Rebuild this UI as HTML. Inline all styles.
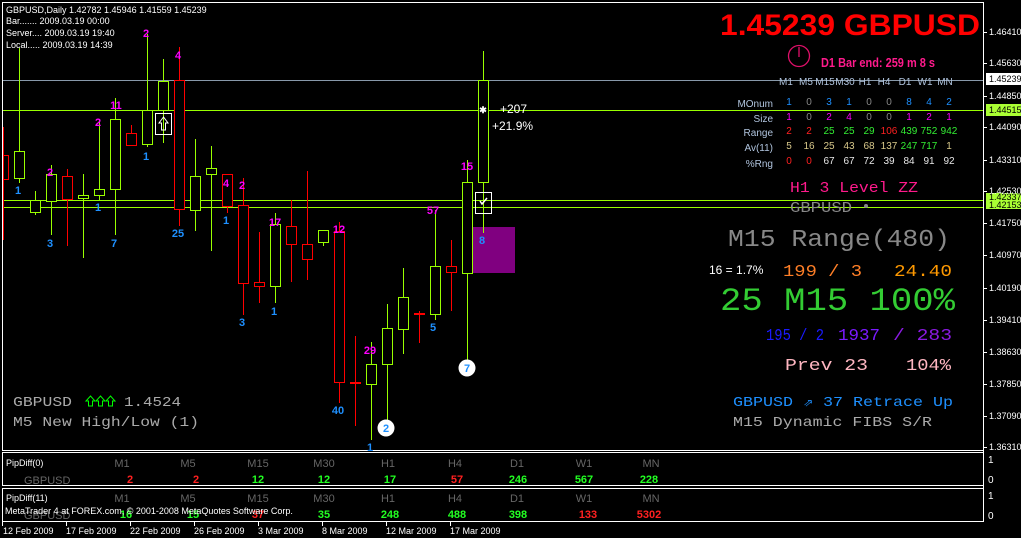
<!DOCTYPE html>
<html><head><meta charset="utf-8"><style>
html,body{margin:0;padding:0;background:#000;width:1021px;height:538px;overflow:hidden}
svg{display:block}
.s{font-family:"Liberation Sans",sans-serif}
.m{font-family:"Liberation Mono",monospace}
.b{font-weight:bold}
</style></head><body>
<svg width="1021" height="538" viewBox="0 0 1021 538" xmlns="http://www.w3.org/2000/svg">
<rect width="1021" height="538" fill="#000"/>
<!-- borders -->
<rect x="2.5" y="2.5" width="981" height="448" fill="none" stroke="#fff"/>
<rect x="2.5" y="452.5" width="981" height="33" fill="none" stroke="#fff"/>
<rect x="2.5" y="488.5" width="981" height="33" fill="none" stroke="#fff"/>
<!-- horizontal lines -->
<line x1="3" y1="80.5" x2="983" y2="80.5" stroke="#8899aa"/>
<line x1="3" y1="110.5" x2="983" y2="110.5" stroke="#99ff00"/>
<line x1="3" y1="200.5" x2="983" y2="200.5" stroke="#99ff00"/>
<line x1="3" y1="207.5" x2="983" y2="207.5" stroke="#99ff00"/>
<!-- purple box -->
<rect x="473" y="227" width="42" height="46" fill="#800080"/>
<g fill="none" stroke-width="1">
<g stroke="#ff0000">
<line x1="3.5" y1="127" x2="3.5" y2="240"/><path d="M3 155.5H8.5V179.5H3"/>
<line x1="67.5" y1="169" x2="67.5" y2="246"/><rect x="62.5" y="176.5" width="10" height="23" fill="#000"/>
<line x1="131.5" y1="125" x2="131.5" y2="145"/><rect x="126.5" y="133.5" width="10" height="12" fill="#000"/>
<line x1="179.5" y1="47" x2="179.5" y2="226"/><rect x="174.5" y="80.5" width="10" height="129" fill="#000"/>
<line x1="227.5" y1="174" x2="227.5" y2="213"/><rect x="222.5" y="174.5" width="10" height="32" fill="#000"/>
<line x1="243.5" y1="178" x2="243.5" y2="315"/><rect x="238.5" y="205.5" width="10" height="78" fill="#000"/>
<line x1="259.5" y1="232" x2="259.5" y2="303"/><rect x="254.5" y="282.5" width="10" height="4" fill="#000"/>
<line x1="291.5" y1="200" x2="291.5" y2="282"/><rect x="286.5" y="226.5" width="10" height="18" fill="#000"/>
<line x1="307.5" y1="171" x2="307.5" y2="280"/><rect x="302.5" y="244.5" width="10" height="15" fill="#000"/>
<line x1="339.5" y1="222" x2="339.5" y2="403"/><rect x="334.5" y="231.5" width="10" height="151" fill="#000"/>
<line x1="355.5" y1="336" x2="355.5" y2="426"/><line x1="350" y1="383" x2="361" y2="383" stroke-width="2"/>
<line x1="419.5" y1="311" x2="419.5" y2="343"/><line x1="414" y1="314" x2="425" y2="314" stroke-width="2"/>
<line x1="451.5" y1="240" x2="451.5" y2="311"/><rect x="446.5" y="266.5" width="10" height="6" fill="#000"/>
</g>
<g stroke="#99ff00">
<line x1="19.5" y1="48" x2="19.5" y2="183"/><rect x="14.5" y="151.5" width="10" height="27" fill="#000"/>
<line x1="35.5" y1="191" x2="35.5" y2="215"/><rect x="30.5" y="200.5" width="10" height="12" fill="#000"/>
<line x1="51.5" y1="165" x2="51.5" y2="235"/><rect x="46.5" y="174.5" width="10" height="27" fill="#000"/>
<line x1="83.5" y1="174" x2="83.5" y2="258"/><rect x="78.5" y="195.5" width="10" height="3" fill="#000"/>
<line x1="99.5" y1="122" x2="99.5" y2="200"/><rect x="94.5" y="189.5" width="10" height="6" fill="#000"/>
<line x1="115.5" y1="98" x2="115.5" y2="235"/><rect x="110.5" y="119.5" width="10" height="70" fill="#000"/>
<line x1="147.5" y1="34" x2="147.5" y2="147"/><rect x="142.5" y="110.5" width="10" height="34" fill="#000"/>
<line x1="163.5" y1="59" x2="163.5" y2="143"/><rect x="158.5" y="81.5" width="10" height="29" fill="#000"/>
<line x1="195.5" y1="139" x2="195.5" y2="231"/><rect x="190.5" y="176.5" width="10" height="34" fill="#000"/>
<line x1="211.5" y1="146" x2="211.5" y2="251"/><rect x="206.5" y="168.5" width="10" height="6" fill="#000"/>
<line x1="275.5" y1="213" x2="275.5" y2="303"/><rect x="270.5" y="224.5" width="10" height="62" fill="#000"/>
<line x1="323.5" y1="230" x2="323.5" y2="246"/><rect x="318.5" y="230.5" width="10" height="12" fill="#000"/>
<line x1="371.5" y1="342" x2="371.5" y2="440"/><rect x="366.5" y="364.5" width="10" height="20" fill="#000"/>
<line x1="387.5" y1="304" x2="387.5" y2="425"/><rect x="382.5" y="328.5" width="10" height="36" fill="#000"/>
<line x1="403.5" y1="268" x2="403.5" y2="354"/><rect x="398.5" y="297.5" width="10" height="32" fill="#000"/>
<line x1="435.5" y1="210" x2="435.5" y2="320"/><rect x="430.5" y="266.5" width="10" height="48" fill="#000"/>
<line x1="467.5" y1="160" x2="467.5" y2="360"/><rect x="462.5" y="182.5" width="10" height="91" fill="#000"/>
<line x1="483.5" y1="51" x2="483.5" y2="233"/><rect x="478.5" y="80.5" width="10" height="102" fill="#000"/>
</g>
<rect x="155.5" y="113.5" width="16" height="21" stroke="#fff"/>
<path d="M163.5 117L159 123H161.5V130H165.5V123H168Z" stroke="#fff"/>
<rect x="475.5" y="192.5" width="16" height="21" stroke="#fff"/>
<path d="M480 201L482 204L487 198" stroke="#fff" stroke-width="1.5"/>
</g>
<text x="483" y="113" fill="#fff" class="s b" font-size="9" text-anchor="middle">✱</text>
<!-- circles -->
<circle cx="467" cy="368" r="8.5" fill="#fff"/><circle cx="386" cy="428" r="8.5" fill="#fff"/>
<g class="s b" font-size="11" text-anchor="middle" fill="#ff00ff">
<text x="146" y="37">2</text><text x="178" y="59">4</text><text x="116" y="109">11</text><text x="98" y="126">2</text><text x="50" y="176">2</text><text x="226" y="187">4</text><text x="242" y="189">2</text><text x="467" y="170">15</text><text x="433" y="214">57</text><text x="275" y="226">17</text><text x="339" y="233">12</text><text x="370" y="354">29</text>
</g>
<g class="s b" font-size="11" text-anchor="middle" fill="#1e90ff">
<text x="18" y="194">1</text><text x="50" y="247">3</text><text x="98" y="211">1</text><text x="114" y="247">7</text><text x="146" y="160">1</text><text x="178" y="237">25</text><text x="226" y="224">1</text><text x="242" y="326">3</text><text x="274" y="315">1</text><text x="433" y="331">5</text><text x="338" y="414">40</text><text x="370" y="451">1</text><text x="482" y="244">8</text><text x="467" y="372">7</text><text x="386" y="432">2</text>
</g>
<text x="500" y="113" fill="#fff" class="s" font-size="12">+207</text>
<text x="492" y="130" fill="#fff" class="s" font-size="12">+21.9%</text>
<!-- top-left info -->
<g class="s" font-size="9" fill="#fff">
<text x="6" y="13">GBPUSD,Daily  1.42782 1.45946 1.41559 1.45239</text>
<text x="6" y="24">Bar....... 2009.03.19 00:00</text>
<text x="6" y="36">Server.... 2009.03.19 19:40</text>
<text x="6" y="48">Local..... 2009.03.19 14:39</text>
</g>
<!-- big price -->
<text x="720" y="35" fill="#ff0000" class="s b" font-size="30" textLength="260" lengthAdjust="spacingAndGlyphs">1.45239 GBPUSD</text>
<circle cx="799" cy="56" r="10.5" fill="none" stroke="#e0106a" stroke-width="1.3"/>
<path d="M799 47V57" stroke="#e0106a" stroke-width="1.3"/>
<text x="821" y="67" fill="#ff1a8c" class="s b" font-size="13" textLength="114" lengthAdjust="spacingAndGlyphs">D1 Bar end: 259 m 8 s</text>
<!-- table -->
<g class="s" font-size="10" text-anchor="middle" fill="#b0c4de">
<text x="786" y="85">M1</text><text x="806" y="85">M5</text><text x="825" y="85">M15</text><text x="845" y="85">M30</text><text x="865" y="85">H1</text><text x="884" y="85">H4</text><text x="905" y="85">D1</text><text x="925" y="85">W1</text><text x="945" y="85">MN</text>
</g>
<g class="s" font-size="10" text-anchor="end" fill="#b0c4de">
<text x="773" y="107">MOnum</text><text x="773" y="122">Size</text><text x="773" y="136">Range</text><text x="773" y="151">Av(11)</text><text x="773" y="167">%Rng</text>
</g>
<g class="s" font-size="10" text-anchor="middle">
<g fill="#1e90ff"><text x="789" y="105">1</text><text x="829" y="105">3</text><text x="849" y="105">1</text><text x="909" y="105">8</text><text x="929" y="105">4</text><text x="949" y="105">2</text></g>
<g fill="#888"><text x="809" y="105">0</text><text x="869" y="105">0</text><text x="889" y="105">0</text><text x="809" y="120">0</text><text x="869" y="120">0</text><text x="889" y="120">0</text></g>
<g fill="#ff00ff"><text x="789" y="120">1</text><text x="829" y="120">2</text><text x="849" y="120">4</text><text x="909" y="120">1</text><text x="929" y="120">2</text><text x="949" y="120">1</text></g>
<g fill="#ff2020"><text x="789" y="134">2</text><text x="809" y="134">2</text><text x="889" y="134">106</text><text x="789" y="164">0</text><text x="809" y="164">0</text></g>
<g fill="#33ee33"><text x="829" y="134">25</text><text x="849" y="134">25</text><text x="869" y="134">29</text><text x="909" y="134">439</text><text x="929" y="134">752</text><text x="949" y="134">942</text><text x="909" y="149">247</text><text x="929" y="149">717</text></g>
<g fill="#d8c88a"><text x="789" y="149">5</text><text x="809" y="149">16</text><text x="829" y="149">25</text><text x="849" y="149">43</text><text x="869" y="149">68</text><text x="889" y="149">137</text><text x="949" y="149">1</text></g>
<g fill="#e8e8e8"><text x="829" y="164">67</text><text x="849" y="164">67</text><text x="869" y="164">72</text><text x="889" y="164">39</text><text x="909" y="164">84</text><text x="929" y="164">91</text><text x="949" y="164">92</text></g>
</g>
<!-- mono texts right -->
<g class="m">
<text x="790" y="192" fill="#ff1a8c" font-size="15" textLength="128" lengthAdjust="spacingAndGlyphs">H1 3 Level ZZ</text>
<text x="790" y="212" fill="#888" font-size="15" textLength="62" lengthAdjust="spacingAndGlyphs">GBPUSD</text>
<circle cx="866" cy="206" r="2" fill="#888"/>
<text x="728" y="246" fill="#888" font-size="24" textLength="222" lengthAdjust="spacingAndGlyphs">M15 Range(480)</text>
<text x="783" y="276" fill="#ff7f27" font-size="17" textLength="79" lengthAdjust="spacingAndGlyphs">199 / 3</text>
<text x="894" y="276" fill="#ff9900" font-size="17" textLength="58" lengthAdjust="spacingAndGlyphs">24.40</text>
<text x="720" y="310" fill="#33cc33" font-size="32" textLength="235" lengthAdjust="spacingAndGlyphs">25  M15 100%</text>
<text x="766" y="340" fill="#1a1aff" font-size="17" textLength="58" lengthAdjust="spacingAndGlyphs">195 / 2</text>
<text x="838" y="340" fill="#7a1aff" font-size="17" textLength="42" lengthAdjust="spacingAndGlyphs">1937</text>
<text x="893" y="340" fill="#8a1ae0" font-size="17" textLength="59" lengthAdjust="spacingAndGlyphs">/ 283</text>
<text x="785" y="370" fill="#ffb6c1" font-size="17" textLength="83" lengthAdjust="spacingAndGlyphs">Prev 23</text>
<text x="906" y="370" fill="#ffb6c1" font-size="17" textLength="45" lengthAdjust="spacingAndGlyphs">104%</text>
<text x="733" y="406" fill="#1e90ff" font-size="14" textLength="220" lengthAdjust="spacingAndGlyphs">GBPUSD ⇗ 37 Retrace Up</text>
<text x="733" y="426" fill="#aaa" font-size="14" textLength="199" lengthAdjust="spacingAndGlyphs">M15 Dynamic FIBS S/R</text>
<text x="13" y="406" fill="#aaa" font-size="14" textLength="59" lengthAdjust="spacingAndGlyphs">GBPUSD</text>
<text x="124" y="406" fill="#aaa" font-size="14" textLength="57" lengthAdjust="spacingAndGlyphs">1.4524</text>
<text x="13" y="426" fill="#aaa" font-size="14" textLength="186" lengthAdjust="spacingAndGlyphs">M5 New High/Low (1)</text>
</g>
<text x="709" y="274" fill="#fff" class="s" font-size="12">16 = 1.7%</text>
<g fill="none" stroke="#00ff00" stroke-width="1">
<path d="M86 401L90.5 396L95 401H92.5V406H88.5V401Z"/><path d="M96 401L100.5 396L105 401H102.5V406H98.5V401Z"/><path d="M106 401L110.5 396L115 401H112.5V406H108.5V401Z"/>
</g>
<!-- right axis -->
<line x1="983.5" y1="2" x2="983.5" y2="522" stroke="#fff"/>
<g stroke="#fff">
<line x1="983" y1="32.5" x2="987" y2="32.5"/><line x1="983" y1="63.5" x2="987" y2="63.5"/><line x1="983" y1="96.5" x2="987" y2="96.5"/><line x1="983" y1="127.5" x2="987" y2="127.5"/><line x1="983" y1="160.5" x2="987" y2="160.5"/><line x1="983" y1="191.5" x2="987" y2="191.5"/><line x1="983" y1="223.5" x2="987" y2="223.5"/><line x1="983" y1="255.5" x2="987" y2="255.5"/><line x1="983" y1="288.5" x2="987" y2="288.5"/><line x1="983" y1="320.5" x2="987" y2="320.5"/><line x1="983" y1="352.5" x2="987" y2="352.5"/><line x1="983" y1="384.5" x2="987" y2="384.5"/><line x1="983" y1="416.5" x2="987" y2="416.5"/><line x1="983" y1="447.5" x2="987" y2="447.5"/>
</g>
<rect x="986" y="73" width="35" height="12" fill="#fff"/>
<rect x="986" y="104" width="35" height="12" fill="#aaff33"/>
<rect x="986" y="193" width="35" height="16" fill="#aaff33"/>
<g class="s" font-size="9" fill="#fff">
<text x="989" y="35">1.46410</text><text x="989" y="66">1.45630</text><text x="989" y="82" fill="#000">1.45239</text><text x="989" y="99">1.44850</text><text x="989" y="113" fill="#000">1.44515</text><text x="989" y="130">1.44090</text><text x="989" y="163">1.43310</text><text x="989" y="194">1.42530</text><text x="989" y="200" fill="#000">1.42337</text><text x="989" y="208" fill="#000">1.42153</text><text x="989" y="226">1.41750</text><text x="989" y="258">1.40970</text><text x="989" y="291">1.40190</text><text x="989" y="323">1.39410</text><text x="989" y="355">1.38630</text><text x="989" y="387">1.37850</text><text x="989" y="419">1.37090</text><text x="989" y="450">1.36310</text>
<text x="988" y="483" font-size="10">0</text><text x="988" y="463" font-size="10">1</text><text x="988" y="519" font-size="10">0</text><text x="988" y="499" font-size="10">1</text>
</g>
<!-- subwindows -->
<g class="s" font-size="9" fill="#fff"><text x="6" y="466">PipDiff(0)</text><text x="6" y="501">PipDiff(11)</text></g>
<text x="24" y="484" fill="#666" class="s" font-size="11">GBPUSD</text>
<text x="24" y="519" fill="#666" class="s" font-size="11">GBPUSD</text>
<g class="s" font-size="11" fill="#666" text-anchor="middle">
<text x="122" y="467">M1</text><text x="188" y="467">M5</text><text x="258" y="467">M15</text><text x="324" y="467">M30</text><text x="388" y="467">H1</text><text x="455" y="467">H4</text><text x="517" y="467">D1</text><text x="584" y="467">W1</text><text x="651" y="467">MN</text>
<text x="122" y="502">M1</text><text x="188" y="502">M5</text><text x="258" y="502">M15</text><text x="324" y="502">M30</text><text x="388" y="502">H1</text><text x="455" y="502">H4</text><text x="517" y="502">D1</text><text x="584" y="502">W1</text><text x="651" y="502">MN</text>
</g>
<g class="s b" font-size="11" text-anchor="middle">
<text x="130" y="483" fill="#ff2020">2</text><text x="196" y="483" fill="#ff2020">2</text><text x="258" y="483" fill="#22ff22">12</text><text x="324" y="483" fill="#22ff22">12</text><text x="390" y="483" fill="#22ff22">17</text><text x="457" y="483" fill="#ff2020">57</text><text x="518" y="483" fill="#22ff22">246</text><text x="584" y="483" fill="#22ff22">567</text><text x="649" y="483" fill="#22ff22">228</text>
<text x="126" y="518" fill="#22ff22">16</text><text x="193" y="518" fill="#22ff22">15</text><text x="258" y="518" fill="#ff2020">37</text><text x="324" y="518" fill="#22ff22">35</text><text x="390" y="518" fill="#22ff22">248</text><text x="457" y="518" fill="#22ff22">488</text><text x="518" y="518" fill="#22ff22">398</text><text x="588" y="518" fill="#ff2020">133</text><text x="649" y="518" fill="#ff2020">5302</text>
</g>
<text x="5" y="514" fill="#fff" class="s" font-size="9">MetaTrader 4 at FOREX.com, © 2001-2008 MetaQuotes Software Corp.</text>
<!-- dates -->
<g stroke="#fff"><line x1="2.5" y1="522" x2="2.5" y2="526"/><line x1="66.5" y1="522" x2="66.5" y2="526"/><line x1="130.5" y1="522" x2="130.5" y2="526"/><line x1="194.5" y1="522" x2="194.5" y2="526"/><line x1="258.5" y1="522" x2="258.5" y2="526"/><line x1="322.5" y1="522" x2="322.5" y2="526"/><line x1="386.5" y1="522" x2="386.5" y2="526"/><line x1="450.5" y1="522" x2="450.5" y2="526"/></g>
<g class="s" font-size="9" fill="#fff">
<text x="3" y="534">12 Feb 2009</text><text x="66" y="534">17 Feb 2009</text><text x="130" y="534">22 Feb 2009</text><text x="194" y="534">26 Feb 2009</text><text x="258" y="534">3 Mar 2009</text><text x="322" y="534">8 Mar 2009</text><text x="386" y="534">12 Mar 2009</text><text x="450" y="534">17 Mar 2009</text>
</g>
</svg>
</body></html>
